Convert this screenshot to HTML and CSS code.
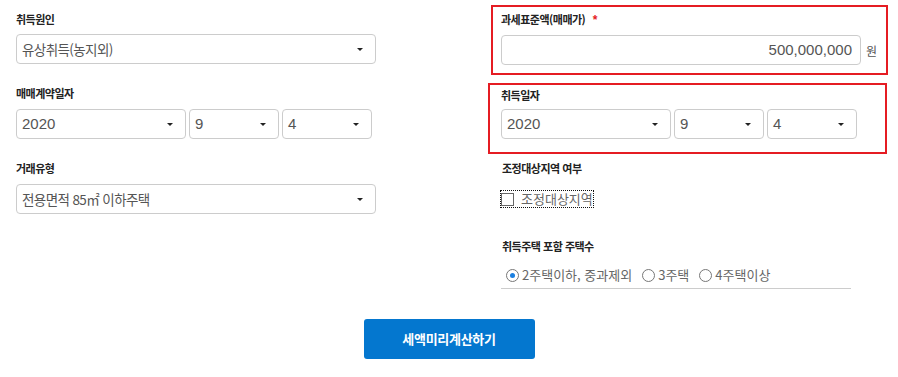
FILE: index.html
```html
<!DOCTYPE html>
<html lang="ko">
<head>
<meta charset="utf-8">
<title>취득세 계산</title>
<link rel="stylesheet" href="styles.css">
</head>
<body>
<div class="form">
  <div class="col col-left">
    <div class="label">취득원인</div>
    <div class="select wide ko">유상취득(농지외)</div>

    <div class="label gap">매매계약일자</div>
    <div class="date-row">
      <div class="select year num">2020</div>
      <div class="select small num">9</div>
      <div class="select small num">4</div>
    </div>

    <div class="label gap">거래유형</div>
    <div class="select wide ko">전용면적 85㎡ 이하주택</div>
  </div>

  <div class="col col-right">
    <div class="box box-price">
      <div class="label">과세표준액(매매가) <span class="req">*</span></div>
      <div class="price-row">
        <div class="input num">500,000,000</div>
        <span class="unit">원</span>
      </div>
    </div>

    <div class="box box-date">
      <div class="label">취득일자</div>
      <div class="date-row">
        <div class="select year num">2020</div>
        <div class="select small num">9</div>
        <div class="select small num">4</div>
      </div>
    </div>

    <div class="label plain l-region">조정대상지역 여부</div>
    <div class="check-row">
      <span class="checkbox"></span>
      <span class="opt-text">조정대상지역</span>
    </div>

    <div class="label plain l-count">취득주택 포함 주택수</div>
    <div class="radio-row">
      <span class="radio on"></span><span class="opt-text">2주택이하, 중과제외</span>
      <span class="radio"></span><span class="opt-text">3주택</span>
      <span class="radio"></span><span class="opt-text">4주택이상</span>
    </div>
  </div>
</div>
<button class="calc-btn" type="button">세액미리계산하기</button>
</body>
</html>
```

FILE: styles.css
```css
* { box-sizing: border-box; }

body {
  margin: 0;
  background: #fff;
  font-family: "Liberation Sans", "Noto Sans CJK KR", sans-serif;
  color: #222;
}

.form {
  display: flex;
  align-items: flex-start;
}

.col-left {
  width: 376px;
  padding-left: 16px;
  padding-top: 11px;
}

.col-right {
  margin-left: 112px;
  width: 400px;
  padding-top: 5px;
}

.label {
  font-family: "Noto Sans CJK KR", sans-serif;
  font-size: 11px;
  font-weight: 700;
  line-height: 16px;
  letter-spacing: -0.5px;
  color: #222;
  white-space: nowrap;
}

.col-left .label { margin-bottom: 7px; }
.col-left .label.gap { margin-top: 21px; margin-bottom: 8px; }

.select {
  position: relative;
  height: 30px;
  border: 1px solid #ccc;
  border-radius: 4px;
  padding-left: 5px;
  line-height: 28px;
  color: #555;
  background: #fff;
  white-space: nowrap;
}

.select::after {
  content: "";
  position: absolute;
  right: 12px;
  top: 13px;
  border-left: 3px solid transparent;
  border-right: 3px solid transparent;
  border-top: 3px solid #222;
}

.ko {
  font-family: "Noto Sans CJK KR", sans-serif;
  font-size: 13.5px;
  letter-spacing: -0.6px;
}

.num {
  font-family: "Liberation Sans", "Noto Sans CJK KR", sans-serif;
  font-size: 15px;
}

.wide { width: 360px; }

.date-row {
  display: flex;
  gap: 3px;
}

.year { width: 170px; }
.small { width: 90px; }

.box {
  border: 2px solid #e51c23;
}

.box-price {
  margin-left: 3px;
  width: 397px;
  height: 70px;
  padding: 4px 0 0 8px;
}

.box-price .label { margin-bottom: 7px; }

.req {
  color: #e51c23;
  font-family: "Liberation Sans", sans-serif;
  font-size: 12px;
  font-weight: 700;
  margin-left: 5px;
  letter-spacing: 0;
}

.price-row {
  display: flex;
  align-items: center;
}

.input {
  width: 360px;
  height: 30px;
  border: 1px solid #ccc;
  border-radius: 4px;
  text-align: right;
  padding-right: 8px;
  line-height: 28px;
  color: #555;
}

.unit {
  margin-left: 5px;
  font-family: "Noto Sans CJK KR", sans-serif;
  font-size: 12px;
  color: #555;
}

.box-date {
  margin-top: 8px;
  width: 399px;
  height: 71px;
  padding: 2px 0 0 11px;
}

.box-date .label { margin-bottom: 6px; }

.plain { margin-left: 14px; }
.l-region { margin-top: 6px; }
.l-count { margin-top: 28px; }

.check-row {
  margin-top: 15px;
  margin-left: 13px;
  display: inline-flex;
  align-items: center;
  height: 16px;
  outline: 1px dotted #111;
}

.checkbox {
  width: 13px;
  height: 13px;
  border: 1px solid #666;
  background: #fff;
  margin-right: 7px;
}

.opt-text {
  font-family: "Noto Sans CJK KR", sans-serif;
  font-size: 13px;
  color: #666;
  line-height: 16px;
  white-space: nowrap;
}

.radio-row {
  margin-top: 10px;
  margin-left: 13px;
  width: 350px;
  height: 25px;
  border-bottom: 1px solid #ccc;
  display: flex;
  align-items: center;
  padding-left: 5px;
  padding-bottom: 1px;
}

.radio {
  width: 13px;
  height: 13px;
  border: 1px solid #777;
  border-radius: 50%;
  background: #fff;
  margin-right: 3px;
  position: relative;
  flex: none;
}

.radio.on::after {
  content: "";
  position: absolute;
  left: 3px;
  top: 3px;
  width: 5px;
  height: 5px;
  border-radius: 50%;
  background: #1a7fe0;
}

.radio-row .opt-text { margin-right: 10px; }

.calc-btn {
  display: block;
  margin: 30px auto 0;
  width: 171px;
  height: 40px;
  border: 0;
  border-radius: 3px;
  background: #0477cf;
  color: #fff;
  font-family: "Noto Sans CJK KR", sans-serif;
  font-size: 13px;
  font-weight: 700;
  letter-spacing: -0.3px;
  padding: 0;
}
```
